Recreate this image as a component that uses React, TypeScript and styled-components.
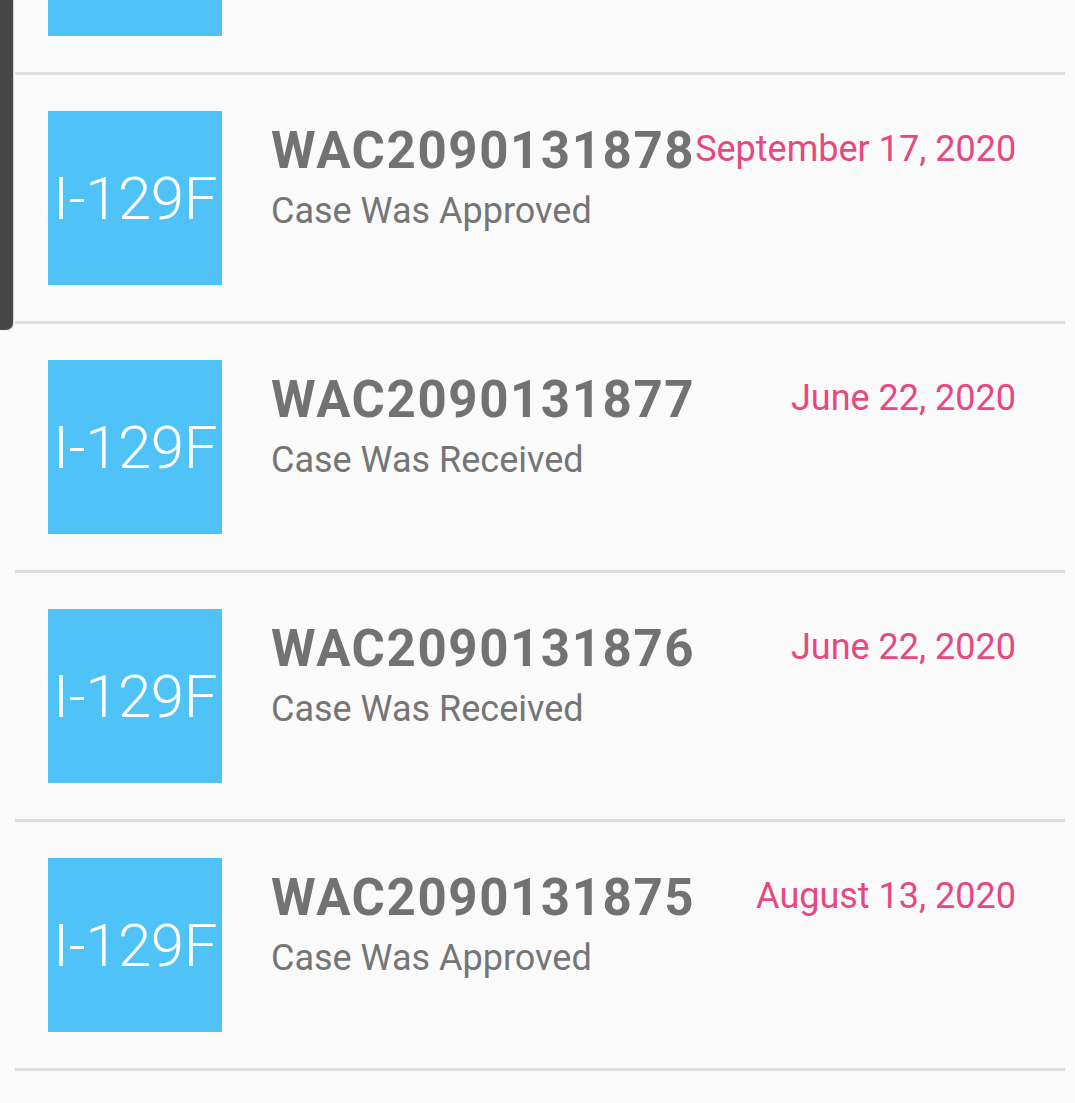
import React from "react";
import styled, { createGlobalStyle } from "styled-components";

const GlobalStyle = createGlobalStyle`
  html, body {
    margin: 0;
    padding: 0;
    background: #fafafa;
    font-family: Roboto, "Noto Sans", "Liberation Sans", sans-serif;
    overflow: hidden;
  }
`;

const Screen = styled.div`
  width: 1075px;
  height: 1103px;
  overflow: hidden;
  background: #fafafa;
  position: relative;
`;

const CaseList = styled.ul`
  list-style: none;
  margin: -174px 10px 0 15px;
  padding: 0;
`;

const CaseRow = styled.li`
  display: flex;
  align-items: flex-start;
  gap: 49px;
  padding: 36px 49px 36px 33px;
  border-bottom: 3px solid #dedede;
`;

const FormBadge = styled.div`
  flex: 0 0 174px;
  height: 174px;
  background: #4fc3f7;
  color: #ffffff;
  display: flex;
  align-items: center;
  justify-content: center;
  font-size: 60px;
  font-weight: 300;
  letter-spacing: -0.5px;
`;

const CaseInfo = styled.div`
  flex: 1;
  min-width: 0;
  display: flex;
  flex-direction: column;
  padding-top: 11px;
`;

const Head = styled.div`
  display: flex;
  justify-content: space-between;
  align-items: flex-start;
`;

const ReceiptNumber = styled.span`
  font-size: 51px;
  line-height: 58px;
  font-weight: 700;
  letter-spacing: 1.6px;
  color: #727272;
  white-space: nowrap;
`;

const CaseDate = styled.span`
  margin-top: 7px;
  font-size: 36px;
  line-height: 41px;
  color: #e6487f;
  white-space: nowrap;
`;

const Status = styled.span`
  margin-top: 11px;
  font-size: 36px;
  line-height: 41px;
  color: #757575;
`;

const ScrollThumb = styled.div`
  position: absolute;
  left: 0;
  top: 0;
  width: 13px;
  height: 330px;
  background: #474747;
  border-bottom-right-radius: 7px;
  box-shadow: 1px 0 1px rgba(0, 0, 0, 0.15);
`;

type CaseItem = {
  form: string;
  receipt: string;
  status: string;
  date: string;
};

const cases: CaseItem[] = [
  { form: "I-129F", receipt: "WAC2090131878", status: "Case Was Approved", date: "September 17, 2020" },
  { form: "I-129F", receipt: "WAC2090131877", status: "Case Was Received", date: "June 22, 2020" },
  { form: "I-129F", receipt: "WAC2090131876", status: "Case Was Received", date: "June 22, 2020" },
  { form: "I-129F", receipt: "WAC2090131875", status: "Case Was Approved", date: "August 13, 2020" },
];

const App: React.FC = () => {
  return (
    <>
      <GlobalStyle />
      <Screen>
        <CaseList>
          {/* row scrolled mostly out of view: only its badge's bottom shows */}
          <CaseRow>
            <FormBadge />
          </CaseRow>
          {cases.map((c) => (
            <CaseRow key={c.receipt}>
              <FormBadge>{c.form}</FormBadge>
              <CaseInfo>
                <Head>
                  <ReceiptNumber>{c.receipt}</ReceiptNumber>
                  <CaseDate>{c.date}</CaseDate>
                </Head>
                <Status>{c.status}</Status>
              </CaseInfo>
            </CaseRow>
          ))}
        </CaseList>
        <ScrollThumb />
      </Screen>
    </>
  );
};

export default App;
